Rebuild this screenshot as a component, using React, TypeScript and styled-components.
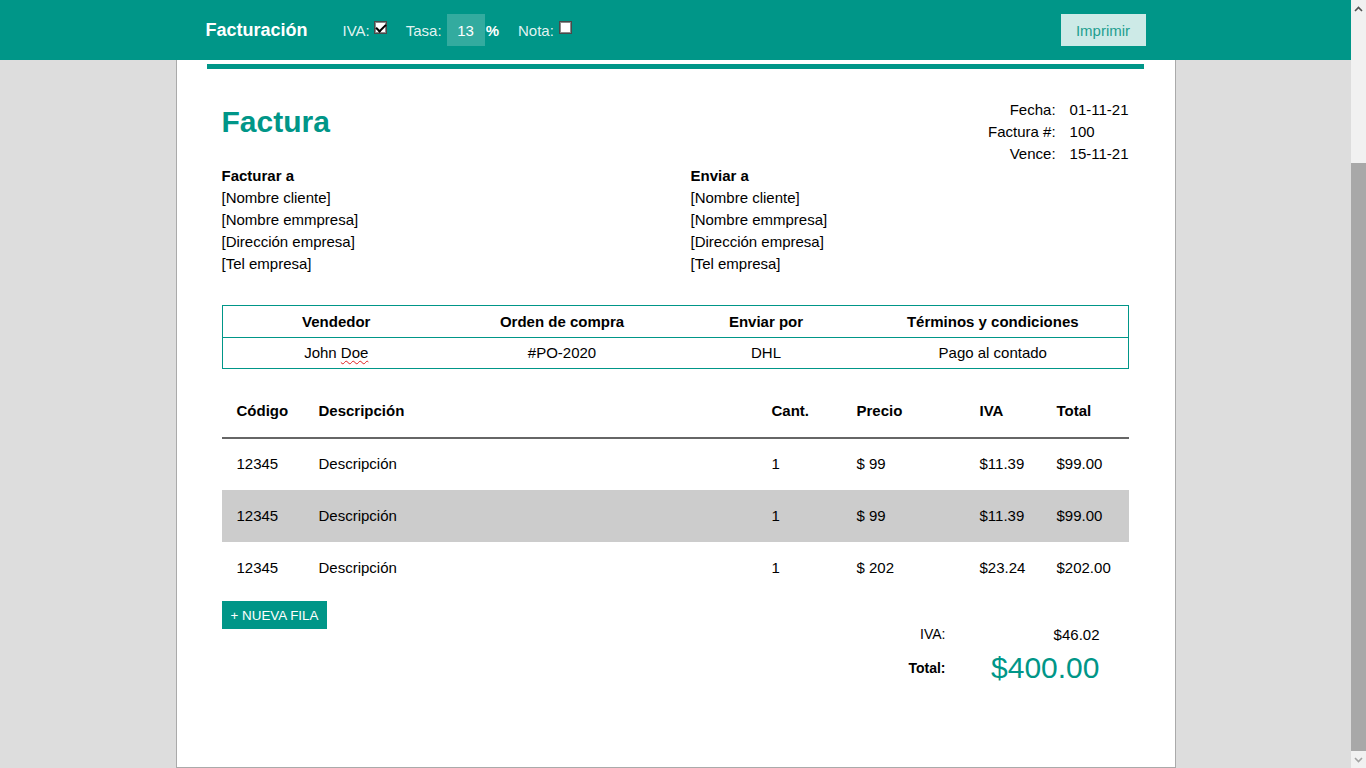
import { useLayoutEffect } from 'react'
import styled, { createGlobalStyle } from 'styled-components'

const teal = '#009688'

const GlobalStyle = createGlobalStyle`
  html, body {
    margin: 0;
    padding: 0;
    background: #dddddd;
    font-family: 'Liberation Sans', Arial, sans-serif;
    font-size: 15px;
    color: #000;
  }
  * {
    box-sizing: border-box;
  }
`

const items = [
  { code: '12345', desc: 'Descripción', qty: '1', price: '$ 99', tax: '$11.39', total: '$99.00' },
  { code: '12345', desc: 'Descripción', qty: '1', price: '$ 99', tax: '$11.39', total: '$99.00' },
  { code: '12345', desc: 'Descripción', qty: '1', price: '$ 202', tax: '$23.24', total: '$202.00' }
]

const address = ['[Nombre cliente]', '[Nombre emmpresa]', '[Dirección empresa]', '[Tel empresa]']

export default function App() {
  // the reference was shot scrolled to the bottom of the sheet
  useLayoutEffect(() => {
    window.scrollTo(0, 191)
  }, [])

  return (
    <>
      <GlobalStyle />
      <TopBar>
        <TopBarInner>
          <Brand>Facturación</Brand>
          <Controls>
            <Control>
              IVA:
              <CheckBox defaultChecked />
            </Control>
            <Control>
              Tasa:
              <RateInput defaultValue="13" />
              <Percent>%</Percent>
            </Control>
            <Control>
              Nota:
              <CheckBox $gap={5} />
            </Control>
          </Controls>
          <PrintButton>Imprimir</PrintButton>
        </TopBarInner>
      </TopBar>

      <Main>
        <Sheet>
          <AccentBar />
          <Content>
            <HeadRow>
              <Title>Factura</Title>
              <Meta>
                <MetaLabel>Fecha:</MetaLabel>
                <span>01-11-21</span>
                <MetaLabel>Factura #:</MetaLabel>
                <span>100</span>
                <MetaLabel>Vence:</MetaLabel>
                <span>15-11-21</span>
              </Meta>
            </HeadRow>

            <Addresses>
              <AddressBlock>
                <strong>Facturar a</strong>
                {address.map((l) => (
                  <div key={l}>{l}</div>
                ))}
              </AddressBlock>
              <AddressBlock>
                <strong>Enviar a</strong>
                {address.map((l) => (
                  <div key={l}>{l}</div>
                ))}
              </AddressBlock>
            </Addresses>

            <InfoTable>
              <colgroup>
                <col style={{ width: 228 }} />
                <col style={{ width: 224 }} />
                <col style={{ width: 184 }} />
                <col />
              </colgroup>
              <thead>
                <tr>
                  <InfoHead>Vendedor</InfoHead>
                  <InfoHead>Orden de compra</InfoHead>
                  <InfoHead>Enviar por</InfoHead>
                  <InfoHead>Términos y condiciones</InfoHead>
                </tr>
              </thead>
              <tbody>
                <tr>
                  <InfoCell>
                    John <Misspelled>Doe</Misspelled>
                  </InfoCell>
                  <InfoCell>#PO-2020</InfoCell>
                  <InfoCell>DHL</InfoCell>
                  <InfoCell>Pago al contado</InfoCell>
                </tr>
              </tbody>
            </InfoTable>

            <ItemsTable>
              <colgroup>
                <col style={{ width: 82 }} />
                <col />
                <col style={{ width: 85 }} />
                <col style={{ width: 123 }} />
                <col style={{ width: 77 }} />
                <col style={{ width: 87 }} />
              </colgroup>
              <thead>
                <tr>
                  <ItemHead>Código</ItemHead>
                  <ItemHead>Descripción</ItemHead>
                  <ItemHead>Cant.</ItemHead>
                  <ItemHead>Precio</ItemHead>
                  <ItemHead>IVA</ItemHead>
                  <ItemHead>Total</ItemHead>
                </tr>
              </thead>
              <tbody>
                {items.map((it, i) => (
                  <ItemRow key={i} $shaded={i === 1}>
                    <ItemCell>{it.code}</ItemCell>
                    <ItemCell>{it.desc}</ItemCell>
                    <ItemCell>{it.qty}</ItemCell>
                    <ItemCell>{it.price}</ItemCell>
                    <ItemCell>{it.tax}</ItemCell>
                    <ItemCell>{it.total}</ItemCell>
                  </ItemRow>
                ))}
              </tbody>
            </ItemsTable>

            <Footer>
              <AddRowButton>+ NUEVA FILA</AddRowButton>
              <Totals>
                <TotalLabel>IVA:</TotalLabel>
                <TotalValue>$46.02</TotalValue>
                <TotalLabel $bold>Total:</TotalLabel>
                <GrandTotal>$400.00</GrandTotal>
              </Totals>
            </Footer>
          </Content>
        </Sheet>
      </Main>

      <ScrollTrack aria-hidden>
        <ScrollArrow>
          <svg width="9" height="6" viewBox="0 0 9 6">
            <path d="M1 5 L4.5 1.5 L8 5" fill="none" stroke="#505050" strokeWidth="1.6" />
          </svg>
        </ScrollArrow>
        <ScrollThumb />
        <ScrollArrow $bottom>
          <svg width="9" height="6" viewBox="0 0 9 6">
            <path d="M1 1 L4.5 4.5 L8 1" fill="none" stroke="#a3a3a3" strokeWidth="1.6" />
          </svg>
        </ScrollArrow>
      </ScrollTrack>
    </>
  )
}

const TopBar = styled.header`
  position: fixed;
  top: 0;
  left: 0;
  right: 15px;
  height: 60px;
  background: ${teal};
  z-index: 10;
`

const TopBarInner = styled.div`
  width: 940px;
  height: 100%;
  margin: 0 auto;
  display: flex;
  align-items: center;
`

const Brand = styled.div`
  color: #fff;
  font-size: 18px;
  font-weight: bold;
`

const Controls = styled.div`
  display: flex;
  align-items: center;
  gap: 19px;
  margin-left: 35px;
  flex: 1;
`

const Control = styled.label`
  display: flex;
  align-items: center;
  color: rgba(255, 255, 255, 0.9);
  font-size: 15px;
`

const CheckBox = styled.input.attrs({ type: 'checkbox' })<{ $gap?: number }>`
  appearance: none;
  position: relative;
  width: 13px;
  height: 13px;
  margin: 0 0 5px ${({ $gap }) => $gap ?? 4}px;
  border: 1px solid #4a4a4a;
  box-shadow: inset 0 0 0 1px #8a8a8a;
  background: #fff;

  &:checked::after {
    content: '';
    position: absolute;
    left: 3px;
    top: 0;
    width: 4px;
    height: 8px;
    border: solid #000;
    border-width: 0 2px 2px 0;
    transform: rotate(45deg);
  }
`

const RateInput = styled.input`
  width: 38px;
  height: 32px;
  margin-left: 5px;
  border: none;
  outline: none;
  background: rgba(255, 255, 255, 0.2);
  color: #fff;
  font-family: inherit;
  font-size: 15px;
  text-align: center;
  padding: 0;
`

const Percent = styled.span`
  margin-left: 1px;
  color: #fff;
  font-weight: bold;
`

const PrintButton = styled.button`
  width: 85px;
  height: 32px;
  border: none;
  background: #cdeae7;
  color: #1f9e90;
  font-family: inherit;
  font-size: 15px;
  padding: 0;
`

const Main = styled.main`
  padding: 80px 15px 0 0;
`

const Sheet = styled.div`
  width: 1000px;
  min-height: 879px;
  margin: 0 auto;
  padding: 174px 31px 0 30px;
  background: #fff;
  border: 1px solid #aaaaaa;
`

const AccentBar = styled.div`
  height: 5px;
  background: ${teal};
`

const Content = styled.div`
  padding: 0 15px;
`

const HeadRow = styled.div`
  display: flex;
  justify-content: space-between;
  align-items: flex-start;
  margin-top: 30px;
`

const Title = styled.h1`
  margin: 6px 0 0;
  font-size: 30px;
  line-height: 34px;
  font-weight: bold;
  color: ${teal};
`

const Meta = styled.div`
  display: grid;
  grid-template-columns: auto auto;
  column-gap: 14px;
  line-height: 22px;
`

const MetaLabel = styled.span`
  text-align: right;
`

const Addresses = styled.div`
  display: grid;
  grid-template-columns: 469px 1fr;
`

const AddressBlock = styled.div`
  line-height: 22px;
`

const InfoTable = styled.table`
  width: 100%;
  margin-top: 30px;
  border-collapse: collapse;
  table-layout: fixed;
  border: 1px solid ${teal};
`

const InfoHead = styled.th`
  padding: 0;
  line-height: 31px;
  font-weight: bold;
  text-align: center;
  border-bottom: 1px solid ${teal};
`

const InfoCell = styled.td`
  padding: 0;
  line-height: 30px;
  text-align: center;
`

const Misspelled = styled.span`
  text-decoration: underline wavy #e02020;
  text-decoration-thickness: 1px;
  text-underline-offset: 2px;
`

const ItemsTable = styled.table`
  width: 100%;
  margin-top: 17px;
  border-collapse: collapse;
  table-layout: fixed;
`

const ItemHead = styled.th`
  height: 52px;
  padding: 0 15px 2px;
  text-align: left;
  font-weight: bold;
  border-bottom: 2px solid #666666;
`

const ItemRow = styled.tr<{ $shaded?: boolean }>`
  background: ${({ $shaded }) => ($shaded ? '#cccccc' : 'transparent')};
`

const ItemCell = styled.td`
  height: 52px;
  padding: 0 15px 2px;
  white-space: nowrap;
`

const Footer = styled.div`
  display: flex;
  justify-content: space-between;
  align-items: flex-start;
  margin-top: 7px;
`

const AddRowButton = styled.button`
  height: 28px;
  padding: 0 9px;
  border: none;
  background: ${teal};
  color: #fff;
  font-family: inherit;
  font-size: 13.4px;
`

const Totals = styled.div`
  display: grid;
  grid-template-columns: 100px 154px;
  grid-template-rows: 22px 34px;
  row-gap: 6px;
  align-items: center;
  justify-items: end;
  margin: 22px 29px 0 0;
`

const TotalLabel = styled.span<{ $bold?: boolean }>`
  font-size: 14px;
  font-weight: ${({ $bold }) => ($bold ? 'bold' : 'normal')};
`

const TotalValue = styled.span`
  font-size: 15px;
`

const GrandTotal = styled.span`
  font-size: 30px;
  line-height: 34px;
  color: ${teal};
`

const ScrollTrack = styled.div`
  position: fixed;
  top: 0;
  right: 0;
  bottom: 0;
  width: 15px;
  display: flex;
  flex-direction: column;
  background: #f1f1f1;
  z-index: 20;
`

const ScrollArrow = styled.div<{ $bottom?: boolean }>`
  height: 17px;
  display: flex;
  align-items: center;
  justify-content: center;
  margin-top: ${({ $bottom }) => ($bottom ? 'auto' : '0')};
`

const ScrollThumb = styled.div`
  height: 588px;
  margin: 146px 0 0;
  background: #a8a8a8;
`
